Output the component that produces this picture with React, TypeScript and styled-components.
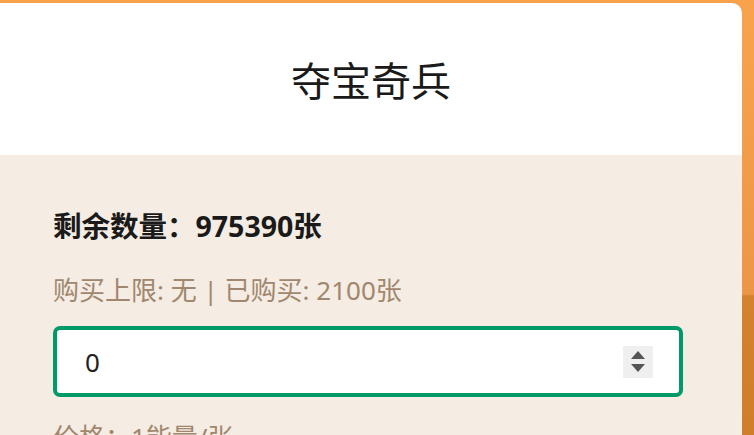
import styled, { createGlobalStyle } from 'styled-components';

const GlobalStyle = createGlobalStyle`
    html, body {
        margin: 0;
        padding: 0;
        height: 100%;
        overflow: hidden;
    }
    body {
        background: linear-gradient(to bottom, #f8a34c 0px, #ec9748 294px, #d3832f 296px, #cf7f2c 435px);
        font-family: "Noto Sans", "Noto Sans CJK SC", sans-serif;
    }
`;

const Page = styled.div`
    padding-top: 3px;
    height: 432px;
`;

const Card = styled.div`
    width: 742px;
    height: 100%;
    border-top-right-radius: 10px;
    overflow: hidden;
    display: flex;
    flex-direction: column;
`;

const Header = styled.div`
    flex-shrink: 0;
    height: 152px;
    background: #fff;
    display: flex;
    align-items: center;
    justify-content: center;
`;

const Title = styled.h1`
    margin: 0;
    font-family: "Noto Sans CJK SC", sans-serif;
    font-size: 40px;
    font-weight: 400;
    color: #1a1a1a;
    line-height: 1;
`;

const Body = styled.div`
    flex: 1;
    min-height: 0;
    overflow: hidden;
    background: #f5ece3;
    padding: 51px 59px 0 53px;
`;

const Line = styled.div<{ $muted?: boolean; $gap?: number }>`
    font-size: ${({ $muted }) => ($muted ? '26px' : '28.5px')};
    font-weight: ${({ $muted }) => ($muted ? 400 : 700)};
    color: ${({ $muted }) => ($muted ? '#a0876f' : '#1a1a1a')};
    line-height: 40px;
    margin-top: ${({ $gap }) => $gap ?? 0}px;
    white-space: nowrap;
`;

const InputBox = styled.div`
    margin-top: 16px;
    height: 71px;
    box-sizing: border-box;
    border: 4px solid #009a68;
    border-radius: 7px;
    background: #fff;
    display: flex;
    align-items: center;
    padding: 0 26px 0 28px;
`;

const NumberField = styled.input`
    flex: 1;
    border: none;
    outline: none;
    background: transparent;
    font-family: "Noto Sans", sans-serif;
    font-size: 26px;
    color: #222;
    padding: 0;
`;

const Spinner = styled.div`
    width: 30px;
    height: 32px;
    background: #efefef;
    display: flex;
    flex-direction: column;
    align-items: center;
    justify-content: center;
    gap: 5px;
`;

const Arrow = styled.span<{ $down?: boolean }>`
    width: 0;
    height: 0;
    border-left: 7px solid transparent;
    border-right: 7px solid transparent;
    ${({ $down }) => ($down ? 'border-top: 8px solid #555;' : 'border-bottom: 8px solid #555;')}
`;

export default function App() {
    return (
        <>
            <GlobalStyle />
            <Page>
                <Card>
                    <Header>
                        <Title>夺宝奇兵</Title>
                    </Header>
                    <Body>
                        <Line>剩余数量：975390张</Line>
                        <Line $muted $gap={24}>购买上限: 无 | 已购买: 2100张</Line>
                        <InputBox>
                            <NumberField type="text" defaultValue="0" readOnly />
                            <Spinner>
                                <Arrow />
                                <Arrow $down />
                            </Spinner>
                        </InputBox>
                        <Line $muted $gap={20}>价格：1能量/张</Line>
                    </Body>
                </Card>
            </Page>
        </>
    );
}
